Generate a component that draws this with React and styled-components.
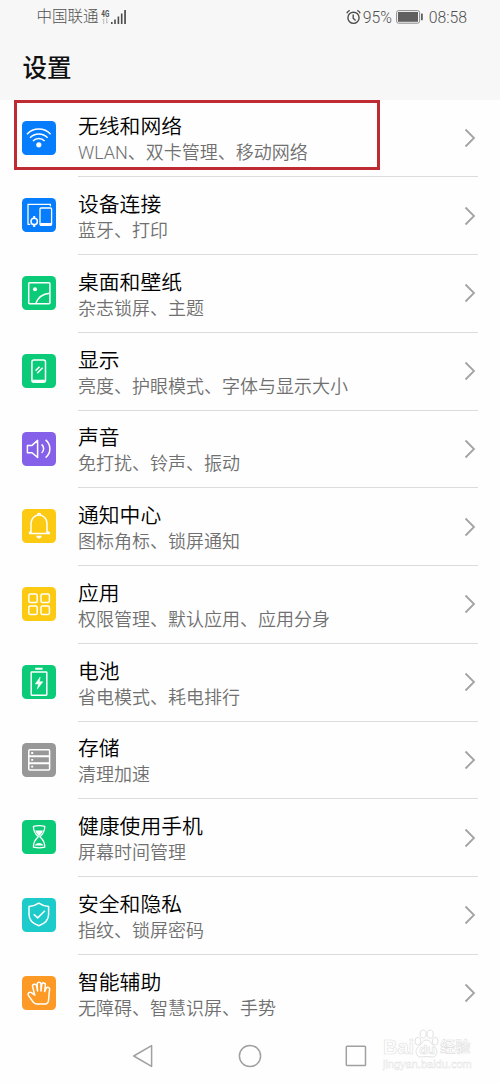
import styled, { createGlobalStyle } from "styled-components";

const GlobalStyle = createGlobalStyle`
  * {
    box-sizing: border-box;
  }
  body {
    margin: 0;
    background: #fefefe;
    font-family: Roboto, "Noto Sans CJK SC", sans-serif;
  }
`;

const icons = {
  wifi: (
    <>
      <path d="M5 13.2a16.2 16.2 0 0 1 23.6 0M8 16.8a12 12 0 0 1 17.6 0M11 20a8 8 0 0 1 11.6 0" />
      <circle cx="16.8" cy="23.8" r="2.6" fill="#fff" stroke="none" />
    </>
  ),
  devices: (
    <>
      <path d="M8.3 26.3H6V6.4h22.4v1.8" strokeWidth="1.3" />
      <rect x="18" y="10" width="11.6" height="17.3" rx="1" strokeWidth="1.3" />
      <path d="M18.3 26.2h11" strokeWidth="2.4" />
      <circle cx="12.2" cy="23.4" r="3.2" />
      <path d="M12.2 18v2.2M12.2 26.6V29" strokeWidth="2" />
    </>
  ),
  picture: (
    <>
      <rect x="6.7" y="6.7" width="21.2" height="21" rx="1" />
      <circle cx="13" cy="13.2" r="2" fill="#fff" stroke="none" />
      <path d="M13.8 27.6c1.8-5.6 6.6-9.8 14-10.4" />
    </>
  ),
  display: (
    <>
      <rect x="9.9" y="6" width="13.6" height="22.2" rx="2" />
      <path d="M10.5 27h12.4" strokeWidth="2.6" />
      <path d="M13.6 16.6l3.9-3.9M15.2 19.2l5.4-5.4" />
    </>
  ),
  sound: (
    <>
      <path d="M5.4 13.4H10l5.6-5v17l-5.6-4.7H5.4z" />
      <path d="M19.6 12.4a5.6 5.6 0 0 1 0 8.6M23.6 7.8a11.4 11.4 0 0 1 0 17.8" />
    </>
  ),
  bell: (
    <>
      <path d="M6.9 24.4h21.2M9 24V14.4a8 8.3 0 0 1 16 0V24M7.2 24.2L9 22M27.8 24.2L25 22" />
      <path d="M15.6 6a1.5 1.5 0 0 1 3 0" />
      <path d="M14.4 26.8h5.2a2.6 2.7 0 0 1-5.2 0z" fill="#fff" stroke="none" />
    </>
  ),
  apps: (
    <>
      <rect x="6.8" y="6.9" width="8.4" height="8.6" rx="1.6" />
      <rect x="19" y="6.9" width="8.4" height="8.6" rx="1.6" />
      <rect x="6.8" y="18.9" width="8.4" height="8.6" rx="1.6" />
      <rect x="19" y="18.9" width="8.4" height="8.6" rx="1.6" />
    </>
  ),
  battery: (
    <>
      <path d="M13.2 3.8h7.4" strokeWidth="2" />
      <rect x="9.2" y="7" width="15.6" height="23.2" rx="0.6" />
      <path d="M18.2 12l-4.9 7h3.3l-1.4 5.2 5.7-7.4h-3.5z" fill="#fff" strokeWidth="0.5" />
    </>
  ),
  storage: (
    <>
      <rect x="6.8" y="6.7" width="20.8" height="20.4" rx="1" />
      <path d="M7 13.3h20.4M7 20.3h20.4" strokeWidth="2" />
      <path d="M9.2 10h2M9.2 16.8h2M9.2 23.7h2" strokeWidth="1.8" />
    </>
  ),
  hourglass: (
    <>
      <path d="M11.4 6.3c3-.8 8.4-.8 11.4 0 0 4.3-2.2 8.2-5 10.5 2.8 2.3 5 6 5 10.3-3 .8-8.4.8-11.4 0 0-4.3 2.2-8 5-10.3-2.8-2.3-5-6.2-5-10.5z" strokeWidth="1.3" />
      <path d="M13.2 10.6H21c-.8 2.2-2.2 4-3.9 5.6-1.7-1.6-3.1-3.4-3.9-5.6zM12.8 25.6c.6-1.6 2.4-2.7 4.3-2.7s3.7 1.1 4.3 2.7z" fill="#fff" stroke="none" />
    </>
  ),
  shield: (
    <>
      <path d="M16.8 5.2c2.8 2 6.2 3 9.8 3.3v8c0 5.4-4 9.2-9.8 11.2C11 25.7 7 21.9 7 16.5v-8c3.6-.3 7-1.3 9.8-3.3z" />
      <path d="M11.7 16.2l4 3.7 7.2-7.2" />
    </>
  ),
  hand: (
    <path d="M12.8 19.2L10.6 10.6c-.6-2.600 3.200-3.400 3.900-1l1.100 5.400-.5-6.800c-.1-2.700 3.800-2.700 3.900 0V15l.7-6.400c.3-2.500 3.900-2.200 3.700.4l-.8 6.600 1.500-3.200c1-2 3.900-1.100 3.500 1.200-.6 3.400-.7 6.600-1 10.400-.2 2.600-1.500 4-3.700 4h-7.700c-1.600 0-2.800-.6-3.900-1.800l-4.800-6.600c-1.500-2 .9-4.400 2.900-2.900z" />
  ),
};

const items = [
  { icon: "wifi", color: "#057dfd", title: "无线和网络", desc: "WLAN、双卡管理、移动网络" },
  { icon: "devices", color: "#057dfd", title: "设备连接", desc: "蓝牙、打印" },
  { icon: "picture", color: "#0bcb78", title: "桌面和壁纸", desc: "杂志锁屏、主题" },
  { icon: "display", color: "#0bcb78", title: "显示", desc: "亮度、护眼模式、字体与显示大小" },
  { icon: "sound", color: "#8560e8", title: "声音", desc: "免打扰、铃声、振动" },
  { icon: "bell", color: "#fcca12", title: "通知中心", desc: "图标角标、锁屏通知" },
  { icon: "apps", color: "#fcca12", title: "应用", desc: "权限管理、默认应用、应用分身" },
  { icon: "battery", color: "#0bcb78", title: "电池", desc: "省电模式、耗电排行" },
  { icon: "storage", color: "#989898", title: "存储", desc: "清理加速" },
  { icon: "hourglass", color: "#0bcb78", title: "健康使用手机", desc: "屏幕时间管理" },
  { icon: "shield", color: "#1ecbcb", title: "安全和隐私", desc: "指纹、锁屏密码" },
  { icon: "hand", color: "#fd9a26", title: "智能辅助", desc: "无障碍、智慧识屏、手势" },
];

const StatusBar = () => (
  <Status>
    <Carrier>中国联通</Carrier>
    <Network>
      <b>4G</b>
      <svg width="7" height="6" viewBox="0 0 7 6" fill="none" stroke="#bbb">
        <path d="M1.7 6V.8L.4 2.2M4.7 0v5.2L6 3.8" />
      </svg>
    </Network>
    <svg width="16" height="15" viewBox="0 0 16 15" fill="#4c4c4c">
      <path d="M0 12h1.6v2H0zM3.2 9.5h1.6V14H3.2zM6.6 6.5h1.6V14H6.6zM9.9 3.6h1.6V14H9.9zM13.2 0h1.7v14h-1.7z" />
    </svg>
    <Spacer />
    <svg width="15" height="16" viewBox="0 0 15 16" fill="none" stroke="#4c4c4c" strokeWidth="1.4">
      <circle cx="7.5" cy="8.8" r="5.6" />
      <path d="M7.2 5.4v3.8l2.4 2.2M.8 4.2c.5-1.3 1.6-2.3 2.9-2.9M14.2 4.2c-.5-1.3-1.6-2.3-2.9-2.9" />
    </svg>
    <Percent>95%</Percent>
    <svg width="28" height="14" viewBox="0 0 28 14">
      <rect x="0.6" y="0.6" width="23" height="12.6" rx="2" fill="none" stroke="#8c8c8c" />
      <rect x="2" y="2" width="20" height="9.8" fill="#606060" />
      <rect x="25" y="3.6" width="1.8" height="6.6" fill="#606060" />
    </svg>
    <Clock>08:58</Clock>
  </Status>
);

const App = () => {
  return (
    <Screen>
      <GlobalStyle />
      <Header>
        <StatusBar />
        <Title>设置</Title>
      </Header>
      <List>
        <Highlight />
        {items.map(({ icon, color, title, desc }) => (
          <Row key={title}>
            <IconTile $color={color} viewBox="0 0 34 34">
              {icons[icon]}
            </IconTile>
            <RowBody>
              <div>
                <h2>{title}</h2>
                <p>{desc}</p>
              </div>
              <svg width="12" height="20" viewBox="0 0 12 20" fill="none" stroke="#a3a3a3" strokeWidth="1.8">
                <path d="M1.5 1.5L10 10l-8.5 8.5" />
              </svg>
            </RowBody>
          </Row>
        ))}
      </List>
      <NavBar>
        <svg width="22" height="24" viewBox="0 0 22 24">
          <path d="M1.7 12L19.6 1.6v20.8z" />
        </svg>
        <svg width="24" height="24" viewBox="0 0 24 24">
          <circle cx="12" cy="12" r="10.6" />
        </svg>
        <svg width="22" height="24" viewBox="0 0 22 24">
          <rect x="1.3" y="2.3" width="19.2" height="19.2" rx="0.8" />
        </svg>
      </NavBar>
      <Watermark>
        <div className="brand">
          <span>Bai</span>
          <Paw>
            <svg width="25" height="29" viewBox="0 0 25 29" fill="#fff" stroke="#e2e2e2">
              <ellipse cx="3.9" cy="12.2" rx="2.9" ry="3.8" />
              <ellipse cx="9.2" cy="5" rx="3" ry="4.1" />
              <ellipse cx="16.2" cy="5.2" rx="3" ry="4.1" />
              <ellipse cx="21.2" cy="12.2" rx="2.9" ry="3.8" />
              <path d="M12.5 11c3.8 0 4.3 3.4 6.8 5.6 3.3 2.8 4.2 5 3.3 7.9-1.6 5.2-6 3-10.1 3s-8.5 2.2-10.1-3c-.9-2.9 0-5.1 3.3-7.9 2.5-2.2 3-5.6 6.8-5.6z" />
            </svg>
            <i>du</i>
          </Paw>
          <em>经验</em>
        </div>
        <small>jingyan.baidu.com</small>
      </Watermark>
    </Screen>
  );
};

const Screen = styled.main`
  position: relative;
  width: 500px;
  height: 1083px;
  overflow: hidden;
  background: #fefefe;
`;

const Header = styled.header`
  height: 99.5px;
  background: #f7f7f7;
`;

const Status = styled.div`
  display: flex;
  align-items: center;
  height: 34px;
  padding: 0 33px 0 36.5px;
  color: #505050;
  svg {
    flex: none;
  }
`;

const Carrier = styled.span`
  padding-top: 1px;
  font-size: 15.5px;
  line-height: 33px;
  font-weight: 300;
  white-space: nowrap;
`;

const Network = styled.span`
  display: flex;
  flex-direction: column;
  align-items: center;
  width: 10px;
  margin-left: 2px;
  b {
    font-size: 8.5px;
    line-height: 8px;
    transform: scaleX(0.75);
  }
`;

const Spacer = styled.span`
  flex: 1;
`;

const Percent = styled.span`
  width: 29px;
  margin: 0 4.5px 0 2px;
  font-size: 15.8px;
  font-weight: 300;
`;

const Clock = styled.span`
  margin-left: 4.5px;
  font-size: 15.8px;
  font-weight: 300;
`;

const Title = styled.h1`
  margin: 0;
  padding: 17px 0 0 22.5px;
  font-size: 24.5px;
  line-height: 36px;
  font-weight: 500;
  color: #111;
`;

const List = styled.section`
  position: relative;
`;

const Highlight = styled.div`
  position: absolute;
  top: 0.5px;
  left: 14px;
  width: 366px;
  height: 70px;
  border: 3px solid #bf2b33;
`;

const Row = styled.div`
  display: flex;
  align-items: center;
  height: 77.75px;
  padding: 0 22px;
  &:last-child > div {
    border-bottom-color: transparent;
  }
`;

const IconTile = styled.svg`
  flex: none;
  width: 34px;
  height: 34px;
  margin: 0 22px 1.5px 0;
  border-radius: 4.5px;
  background: ${({ $color }) => $color};
  fill: none;
  stroke: #fff;
  stroke-width: 1.5;
  stroke-linejoin: round;
`;

const RowBody = styled.div`
  display: flex;
  flex: 1;
  align-items: center;
  justify-content: space-between;
  height: 100%;
  padding-right: 2px;
  border-bottom: 1px solid #dcdcdc;
  h2 {
    margin: 0;
    padding-top: 3px;
    font-size: 20.8px;
    line-height: 28px;
    font-weight: 350;
    color: #000;
  }
  p {
    margin: 0;
    font-size: 18px;
    line-height: 24px;
    font-weight: 350;
    color: #707070;
  }
`;

const NavBar = styled.nav`
  display: flex;
  align-items: center;
  justify-content: space-between;
  height: 24px;
  margin: 11.5px 133px 0 132px;
  svg {
    fill: none;
    stroke: #a0a0a0;
    stroke-width: 1.5;
    stroke-linejoin: round;
  }
`;

const Watermark = styled.div`
  position: absolute;
  left: 383px;
  top: 1028px;
  width: 90px;
  color: #fff;
  font-family: "Liberation Sans", "Noto Sans CJK SC", sans-serif;
  -webkit-text-stroke: 0.6px #dedede;
  .brand {
    display: flex;
    align-items: flex-end;
    height: 30px;
    font-size: 20px;
    line-height: 22px;
    font-weight: 700;
  }
  em {
    font-size: 15px;
    font-style: normal;
    margin-left: 1px;
  }
  small {
    display: block;
    font-size: 11px;
    line-height: 13px;
    -webkit-text-stroke: 0.4px #e2e2e2;
  }
`;

const Paw = styled.span`
  position: relative;
  width: 25px;
  height: 29px;
  svg {
    display: block;
  }
  i {
    position: absolute;
    left: 5px;
    bottom: 0;
    font-size: 13px;
    line-height: 16px;
    font-style: normal;
  }
`;

export default App;
